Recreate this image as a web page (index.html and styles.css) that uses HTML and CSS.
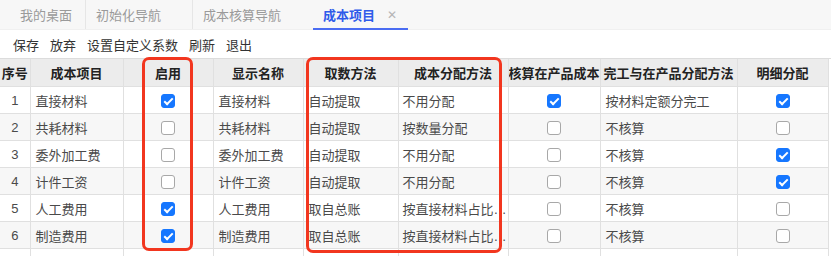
FILE: index.html
```html
<!DOCTYPE html>
<html lang="zh-CN">
<head>
    <meta charset="UTF-8">
    <title>成本项目</title>
    <link rel="stylesheet" href="styles.css">
</head>
<body>

<!-- Tabs -->
<div class="tab-bar">
    <div class="tab tab-home">我的桌面</div>
    <div class="tab">初始化导航</div>
    <div class="tab">成本核算导航</div>
    <div class="tab active">成本项目<span class="close">✕</span></div>
</div>

<!-- Toolbar -->
<div class="toolbar">
    <span>保存</span>
    <span>放弃</span>
    <span>设置自定义系数</span>
    <span>刷新</span>
    <span>退出</span>
</div>

<!-- Grid -->
<div class="grid-wrap">
    <table class="grid">
        <colgroup>
            <col style="width:30px">
            <col style="width:93px">
            <col style="width:90px">
            <col style="width:90px">
            <col style="width:95px">
            <col style="width:110px">
            <col style="width:92px">
            <col style="width:137px">
            <col style="width:91px">
        </colgroup>
        <thead>
            <tr>
                <th>序号</th>
                <th>成本项目</th>
                <th>启用</th>
                <th>显示名称</th>
                <th>取数方法</th>
                <th>成本分配方法</th>
                <th>核算在产品成本</th>
                <th>完工与在产品分配方法</th>
                <th>明细分配</th>
            </tr>
        </thead>
        <tbody>
            <tr>
                <td class="num">1</td>
                <td>直接材料</td>
                <td class="chk"><span class="box checked"></span></td>
                <td>直接材料</td>
                <td>自动提取</td>
                <td class="alloc">不用分配</td>
                <td class="chk"><span class="box checked"></span></td>
                <td>按材料定额分完工</td>
                <td class="chk"><span class="box checked"></span></td>
            </tr>
            <tr>
                <td class="num">2</td>
                <td>共耗材料</td>
                <td class="chk"><span class="box"></span></td>
                <td>共耗材料</td>
                <td>自动提取</td>
                <td class="alloc">按数量分配</td>
                <td class="chk"><span class="box"></span></td>
                <td>不核算</td>
                <td class="chk"><span class="box"></span></td>
            </tr>
            <tr>
                <td class="num">3</td>
                <td>委外加工费</td>
                <td class="chk"><span class="box"></span></td>
                <td>委外加工费</td>
                <td>自动提取</td>
                <td class="alloc">不用分配</td>
                <td class="chk"><span class="box"></span></td>
                <td>不核算</td>
                <td class="chk"><span class="box checked"></span></td>
            </tr>
            <tr>
                <td class="num">4</td>
                <td>计件工资</td>
                <td class="chk"><span class="box"></span></td>
                <td>计件工资</td>
                <td>自动提取</td>
                <td class="alloc">不用分配</td>
                <td class="chk"><span class="box"></span></td>
                <td>不核算</td>
                <td class="chk"><span class="box checked"></span></td>
            </tr>
            <tr>
                <td class="num">5</td>
                <td>人工费用</td>
                <td class="chk"><span class="box checked"></span></td>
                <td>人工费用</td>
                <td>取自总账</td>
                <td class="alloc">按直接材料占比分配</td>
                <td class="chk"><span class="box"></span></td>
                <td>不核算</td>
                <td class="chk"><span class="box"></span></td>
            </tr>
            <tr>
                <td class="num">6</td>
                <td>制造费用</td>
                <td class="chk"><span class="box checked"></span></td>
                <td>制造费用</td>
                <td>取自总账</td>
                <td class="alloc">按直接材料占比分配</td>
                <td class="chk"><span class="box"></span></td>
                <td>不核算</td>
                <td class="chk"><span class="box"></span></td>
            </tr>
            <tr class="blank">
                <td></td><td></td><td></td><td></td><td></td><td></td><td></td><td></td><td></td>
            </tr>
        </tbody>
    </table>

    <!-- Annotation frames -->
    <div class="mark mark-enable"></div>
    <div class="mark mark-method"></div>
</div>

</body>
</html>
```

FILE: styles.css
```css
body {
    margin: 0;
    width: 831px;
    height: 256px;
    overflow: hidden;
    background-color: #fff;
    font-family: "Liberation Sans", "Noto Sans CJK SC", sans-serif;
    font-size: 13px;
    color: #444;
}

/* Tabs */
.tab-bar {
    display: flex;
    height: 29px;
    padding-left: 10px;
    background-color: #f7f7f7;
    border-bottom: 1px solid #f0f0f0;
}

.tab {
    position: relative;
    display: flex;
    align-items: center;
    padding: 0 31px 0 10px;
    color: #9a9a9a;
    border-left: 1px solid #e6e6e6;
}

.tab-home {
    padding-right: 13px;
    border-left: none;
}

.tab.active {
    padding-right: 11px;
    color: #2f5bea;
    font-weight: bold;
    border-left-color: transparent;
}

.tab.active::after {
    content: "";
    position: absolute;
    left: 0;
    right: 0;
    bottom: -1px;
    height: 2px;
    background-color: #4a6cf2;
}

.tab .close {
    margin-left: 12px;
    font-size: 12px;
    font-weight: normal;
    color: #b5b5b5;
}

/* Toolbar */
.toolbar {
    display: flex;
    align-items: center;
    gap: 11px;
    height: 28px;
    padding-left: 13px;
    color: #333;
}

/* Grid */
.grid-wrap {
    position: relative;
    border-top: 1px solid #dcdcdc;
}

.grid {
    table-layout: fixed;
    width: 828px;
    border-collapse: collapse;
}

.grid th,
.grid td {
    border: 1px solid #e0e0e0;
    white-space: nowrap;
    overflow: hidden;
    text-overflow: ellipsis;
}

.grid tr > :first-child {
    border-left: none;
}

.grid thead tr > * {
    border-top: none;
}

.grid th {
    height: 27px;
    padding: 0;
    background-color: #ececec;
    color: #222;
    font-weight: bold;
    text-align: center;
}

.grid td {
    height: 26px;
    padding: 0 2px 0 5px;
    color: #4a4a4a;
}

.grid td.alloc {
    padding: 0 0 0 4px;
}

.grid tbody tr:nth-child(even) td {
    background-color: #f7f7f7;
}

.grid td.num {
    padding: 0;
    text-align: center;
}

.grid td.chk {
    padding: 0;
    text-align: center;
}

.box {
    position: relative;
    display: inline-block;
    width: 12px;
    height: 12px;
    vertical-align: middle;
    border: 1px solid #a8a8a8;
    border-radius: 3px;
    background-color: #fff;
}

.box.checked {
    border-color: #1677ff;
    background-color: #1677ff;
}

.box.checked::after {
    content: "";
    position: absolute;
    left: 4px;
    top: 1px;
    width: 3px;
    height: 7px;
    border: solid #fff;
    border-width: 0 2px 2px 0;
    transform: rotate(45deg);
}

.grid tr.blank td {
    height: 20px;
    background-color: #fff;
}

/* Annotation frames */
.mark {
    position: absolute;
    top: -2px;
    height: 188px;
    border: 3px solid #f2361f;
    border-radius: 7px;
}

.mark-enable {
    left: 142px;
    width: 45px;
}

.mark-method {
    left: 306px;
    width: 190px;
    height: 190px;
}
```
